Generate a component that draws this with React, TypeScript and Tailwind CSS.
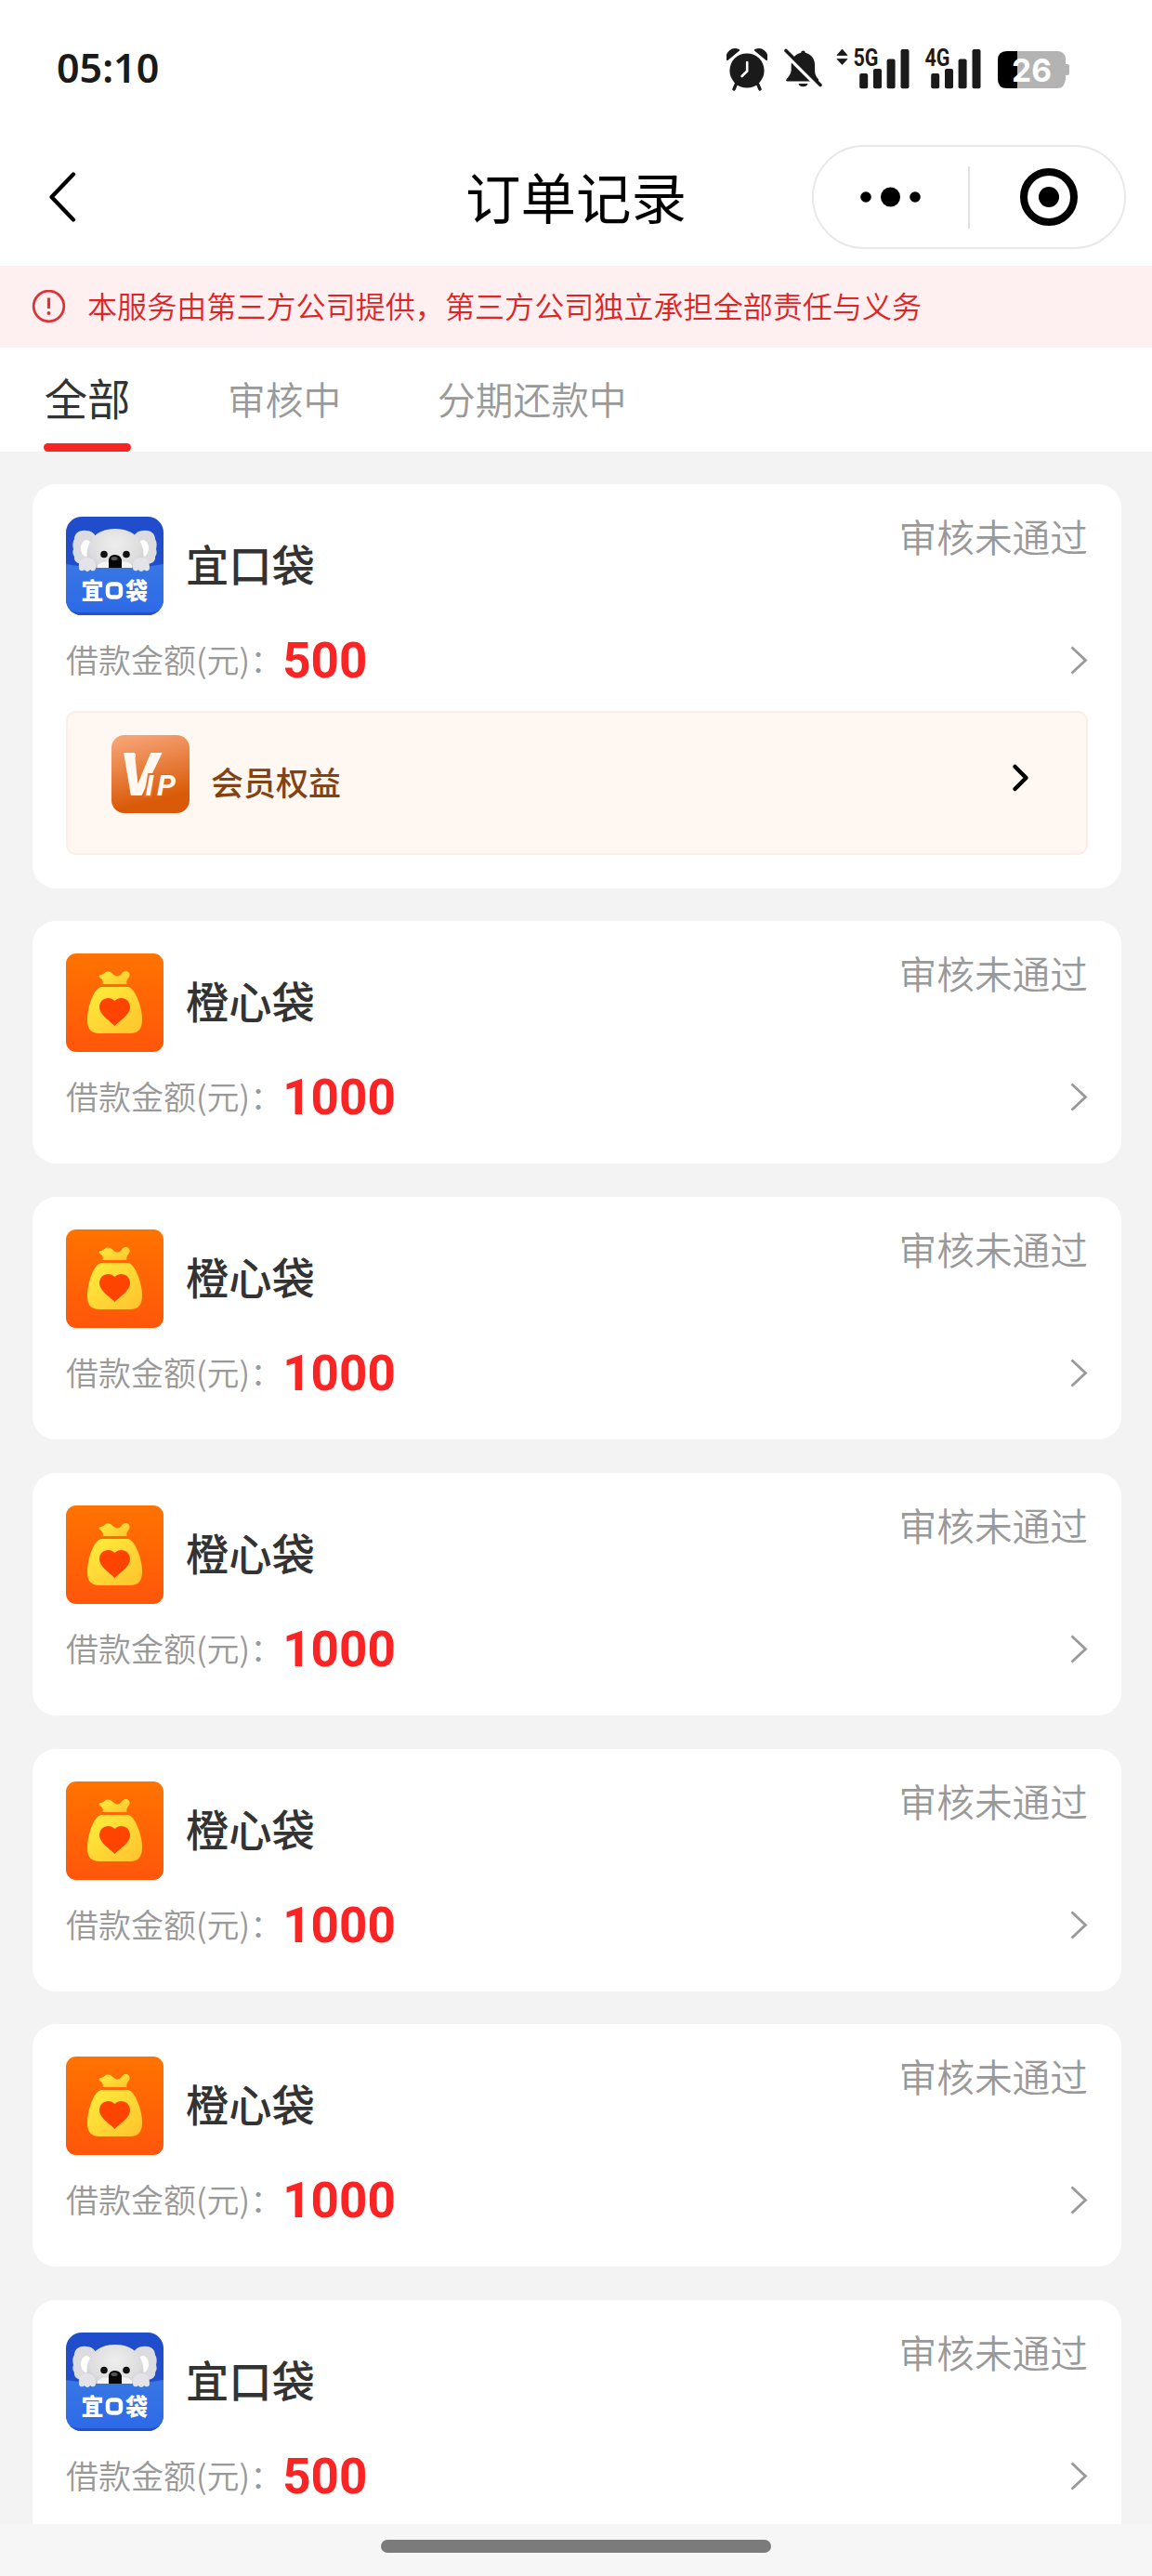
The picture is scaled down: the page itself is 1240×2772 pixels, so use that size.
import React from "react";

type Order = { app: "koala" | "bag"; name: string; amount: string; vip?: boolean };

const orders: Order[] = [
  { app: "koala", name: "宜口袋", amount: "500", vip: true },
  { app: "bag", name: "橙心袋", amount: "1000" },
  { app: "bag", name: "橙心袋", amount: "1000" },
  { app: "bag", name: "橙心袋", amount: "1000" },
  { app: "bag", name: "橙心袋", amount: "1000" },
  { app: "bag", name: "橙心袋", amount: "1000" },
  { app: "koala", name: "宜口袋", amount: "500" },
];

function AlarmIcon() {
  return (
    <svg className="ml-[609px] h-[46px] w-[44px] shrink-0" viewBox="0 0 44 46" fill="none">
      <path d="M1 12C-1 5 6-1 13 2Z" fill="#1a1a1a" stroke="#1a1a1a" strokeWidth="2" strokeLinejoin="round" />
      <path d="M43 12C45 5 38-1 31 2Z" fill="#1a1a1a" stroke="#1a1a1a" strokeWidth="2" strokeLinejoin="round" />
      <path d="M11 37l-3 7M33 37l3 7" stroke="#1a1a1a" strokeWidth="3.4" strokeLinecap="round" />
      <circle cx="22" cy="24" r="18.6" fill="#1a1a1a" />
      <path d="M22.2 15v9.500l-5.600 5.500" stroke="#fff" strokeWidth="2.600" strokeLinecap="round" strokeLinejoin="round" />
    </svg>
  );
}

function MutedBellIcon() {
  return (
    <svg className="ml-[17px] h-[46px] w-[44px] shrink-0" viewBox="0 0 44 46" fill="none">
      <path d="M21.500 2.500c1.300 0 2 .8 2.300 2.200 6.200 1.600 10 6.300 10.300 13v6.800c0 3.400 1.500 6.200 3.600 8.400.8.9.6 2.600-1 2.600H4.500c-1.500 0-1.700-1.700-.8-2.600C6 30.500 8.500 27.500 8.700 23.500v-6c.4-6.500 4-11.200 10.500-12.800.3-1.400 1-2.200 2.300-2.200Z" fill="#1a1a1a" />
      <path d="M16.500 38h10c-.6 2.200-2.500 3.200-5 3.200s-4.400-1-5-3.200Z" fill="#1a1a1a" />
      <path d="M0 3.500 38 41.500" stroke="#fff" strokeWidth="4.500" />
      <path d="M3 2.500 40 39.500" stroke="#1a1a1a" strokeWidth="3.600" strokeLinecap="round" />
    </svg>
  );
}

function Signal({ label, arrows }: { label: string; arrows?: boolean }) {
  return (
    <svg
      className={
        arrows
          ? "ml-[13px] h-[46px] w-[80px] shrink-0 overflow-visible"
          : "ml-[-3px] h-[46px] w-[80px] shrink-0 overflow-visible"
      }
      viewBox="0 0 80 46"
    >
      {arrows && (
        <path d="M1 7.500 6.500 1 12 7.500ZM1 11.500 6.500 17.500 12 11.500Z" fill="#1a1a1a" stroke="#1a1a1a" strokeWidth=".8" strokeLinejoin="round" />
      )}
      <text x="18.500" y="18.700" textLength="27" lengthAdjust="spacingAndGlyphs" className="fill-[#1a1a1a] font-['Roboto'] text-[25px] font-bold">
        {label}
      </text>
      <rect x="25.200" y="27" width="9" height="16.200" rx="2" fill="#1a1a1a" />
      <rect x="40" y="22" width="9" height="21.200" rx="2" fill="#1a1a1a" />
      <rect x="54.600" y="11.500" width="9" height="31.700" rx="2" fill="#1a1a1a" />
      <rect x="69.500" y="1" width="9" height="42.200" rx="2" fill="#1a1a1a" />
    </svg>
  );
}

function Battery() {
  return (
    <svg className="ml-[17px] h-[46px] w-[78px] shrink-0" viewBox="0 0 78 46">
      <defs>
        <clipPath id="battery">
          <path d="M10 3h54q8 0 9 8v6h1.500q2.500 0 2.500 2.500v7q0 2.500-2.500 2.500H73v4q-1 10-9 10H10Q0 43 0 33V13Q0 3 10 3Z" />
        </clipPath>
      </defs>
      <g clipPath="url(#battery)">
        <rect width="78" height="46" fill="#b3b3b3" />
        <rect width="21" height="46" fill="#000" />
      </g>
      <text x="15" y="35.500" textLength="43" lengthAdjust="spacingAndGlyphs" className="fill-white font-['Inter'] text-[34px] font-bold">
        26
      </text>
    </svg>
  );
}

function KoalaLogo() {
  return (
    <svg className="h-[106px] w-[105px] shrink-0 rounded-[17px]" viewBox="0 0 105 106">
      <defs>
        <radialGradient id="fur" cx=".5" cy=".35" r=".7">
          <stop offset="0" stopColor="#eeeeee" />
          <stop offset=".65" stopColor="#dddddf" />
          <stop offset="1" stopColor="#bfc1c8" />
        </radialGradient>
        <linearGradient id="pocket" x1="0" y1="0" x2="0" y2="1">
          <stop offset="0" stopColor="#3877e4" />
          <stop offset="1" stopColor="#2d69e8" />
        </linearGradient>
      </defs>
      <rect width="105" height="106" fill="#204dcc" />
      <path d="M9 24c0-7 7-10 13-9 6 0 10 4 11 9l-2 27H18c-5 0-10-3-9-8-2-3-2-5-1-8-1-4-1-8 1-11Z" fill="#dcdce0" />
      <path d="M96 24c0-7-7-10-13-9-6 0-10 4-11 9l2 27h13c5 0 10-3 9-8 2-3 2-5 1-8 1-4 1-8-1-11Z" fill="#dcdce0" />
      <ellipse cx="22" cy="34" rx="6" ry="9" fill="#fff" />
      <ellipse cx="83" cy="34" rx="6" ry="9" fill="#fff" />
      <path d="M23 48C20 28 31 13 53 13s33 15 30 35l-9 14H31Z" fill="url(#fur)" />
      <path d="M34 52c4-4 10-4 14-3h10c4-1 10-1 13 3v4H34Z" fill="#f5f5f5" />
      <circle cx="41" cy="40.500" r="3.800" fill="#111" />
      <circle cx="65" cy="40.500" r="3.800" fill="#111" />
      <path d="M46 56v-9c0-8 13-8 14 0v9Z" fill="#080808" />
      <ellipse cx="52" cy="45" rx="3.500" ry="2" fill="#555" />
      <path d="M0 51q17 3 32 4h41q16-1 32-4v55H0Z" fill="url(#pocket)" />
      <path d="M0 91q1 12 15 12h75q14 0 15-12v15H0Z" fill="#2451c8" />
      <path d="M14 55c-1-7 3-11 9-11s10 5 9 11c0 4-4 4-6 2-2 3-5 2-6 0-2 2-6 2-6-2ZM72 55c-1-7 3-11 9-11s9 4 9 11c0 4-4 4-6 2-1 2-4 3-6 0-2 2-6 2-6-2Z" fill="#e4e4e8" />
      <text x="16.500" y="89" textLength="24" lengthAdjust="spacingAndGlyphs" className="fill-white font-['Noto_Sans_CJK_SC'] text-[25px] font-black">
        宜
      </text>
      <rect x="45" y="72.500" width="14" height="14" rx="4" fill="none" stroke="#fff" strokeWidth="4.500" />
      <text x="64" y="89" textLength="24" lengthAdjust="spacingAndGlyphs" className="fill-white font-['Noto_Sans_CJK_SC'] text-[25px] font-black">
        袋
      </text>
    </svg>
  );
}

function BagLogo() {
  return (
    <svg className="h-[106px] w-[105px] shrink-0 rounded-[11px]" viewBox="0 0 105 106">
      <defs>
        <linearGradient id="orange" x1="0" y1="0" x2="0" y2="1">
          <stop offset="0" stopColor="#ff7300" />
          <stop offset="1" stopColor="#ff560b" />
        </linearGradient>
        <linearGradient id="gold" x1="0" y1="0" x2="1" y2="1">
          <stop offset="0" stopColor="#ffee3c" />
          <stop offset="1" stopColor="#ffc22e" />
        </linearGradient>
      </defs>
      <rect width="105" height="106" fill="url(#orange)" />
      <path d="M39.500 33c1-3 0-5-3-7-1.500-1.500-1-3 1-3 3 0 4-3 7-3.500 5-1 6.500 5 11 5 4 0 4-4 7-5 4-1.500 6.500 1.500 6 4.500-.5 3-4 4-3 9Z" fill="url(#gold)" />
      <path d="M38 36h29c7 1 15 21 15 35 0 10-4 15-13 15H36c-9 0-13-5-13-14 0-17 8-35 15-36Z" fill="url(#gold)" />
      <path d="M52.500 78C48 73 36 66 36 58c0-10 11-13 16.500-7C58 45 69 48 69 58c0 8-12 15-16.500 20Z" fill="#ff4300" />
    </svg>
  );
}

function VipLogo() {
  return (
    <svg className="mt-[24px] ml-[47px] h-[84px] w-[84px] shrink-0 rounded-[14px]" viewBox="0 0 84 84">
      <defs>
        <linearGradient id="copper" x1=".35" y1="0" x2=".6" y2="1">
          <stop offset="0" stopColor="#f6a273" />
          <stop offset=".85" stopColor="#d95a08" />
        </linearGradient>
      </defs>
      <rect width="84" height="84" fill="url(#copper)" />
      <path d="M14 20h12v4H15Z" fill="#fff8f0" />
      <text y="65" className="fill-[#fff8f0] font-['Roboto'] italic">
        <tspan x="9" className="text-[64px] font-black">V</tspan>
        <tspan x="36.500" className="text-[32px] font-bold [paint-order:stroke] [stroke:#e2702c] [stroke-width:4px]">I</tspan>
        <tspan x="49" className="text-[32px] font-bold [paint-order:stroke] [stroke:#df6820] [stroke-width:2px]">P</tspan>
      </text>
    </svg>
  );
}

function OrderCard({ order }: { order: Order }) {
  return (
    <article
      className={
        order.vip
          ? "h-[434.500px] shrink-0 rounded-[25px] bg-white px-[36px] pt-[35px]"
          : "h-[261px] shrink-0 rounded-[25px] bg-white px-[36px] pt-[35px]"
      }
    >
      <div className="flex h-[106px] items-start">
        {order.app === "koala" ? <KoalaLogo /> : <BagLogo />}
        <h2 className="ml-[24px] text-[46.300px] leading-[100px] font-medium text-[#333]">{order.name}</h2>
        <span className="ml-auto text-[40.700px] leading-[42px] font-[350] text-[#999]">审核未通过</span>
      </div>
      <div className="mt-[16px] flex h-[64px] items-center">
        <span className="pb-[2px] text-[35px] leading-[62px] font-[350] text-[#999]">借款金额(元)：</span>
        <span className="pt-[2px] font-['Roboto'] text-[53px] leading-[64px] font-bold text-[#fb2424]">{order.amount}</span>
        <svg className="ml-auto h-[32px] w-[19px]" viewBox="0 0 19 32" fill="none">
          <path d="M1.500 2.500 16.500 16.500 1.500 30.500" stroke="#999" strokeWidth="2.800" />
        </svg>
      </div>
      {order.vip && (
        <div className="mt-[23px] flex h-[155px] rounded-[11px] border-2 border-[#fbeee6] bg-[#fff7f1]">
          <VipLogo />
          <span className="ml-[23px] text-[35px] leading-[147px] font-medium text-[#834211]">会员权益</span>
          <svg className="mt-[54px] mr-[61px] ml-auto h-[32px] w-[20px]" viewBox="0 0 20 32" fill="none">
            <path d="M4.500 4 16.500 16 4.500 28" stroke="#000" strokeWidth="4.500" strokeLinecap="round" strokeLinejoin="round" />
          </svg>
        </div>
      )}
    </article>
  );
}

export default function App() {
  return (
    <div className="flex h-[2772px] w-[1240px] flex-col overflow-hidden bg-[#f3f3f3] font-['Noto_Sans_CJK_SC',sans-serif]">
      <div className="flex h-[138px] shrink-0 items-start bg-white pt-[52px] pl-[61px]">
        <span className="w-[112px] font-['Noto_Sans'] text-[43px] leading-[42px] font-semibold text-[#1a1a1a]">05:10</span>
        <AlarmIcon />
        <MutedBellIcon />
        <Signal label="5G" arrows />
        <Signal label="4G" />
        <Battery />
      </div>

      <header className="grid h-[148px] shrink-0 grid-cols-[440px_360px_440px] bg-white">
        <svg className="mt-[45px] ml-[50px] h-[58px] w-[34px]" viewBox="0 0 34 58" fill="none">
          <path d="M29 4.500 5.500 29 29 53.500" stroke="#000" strokeWidth="4.300" strokeLinecap="round" strokeLinejoin="round" />
        </svg>
        <h1 className="text-center text-[59.500px] leading-[145px] text-black">订单记录</h1>
        <div className="mt-[18px] ml-[74px] flex h-[112px] w-[338px] items-center rounded-full border-2 border-[#e8e8e8]">
          <svg className="ml-[49px] h-[24px] w-[70px]" viewBox="0 0 70 24">
            <circle cx="7" cy="12" r="5.800" />
            <circle cx="33.500" cy="12" r="10.500" />
            <circle cx="60" cy="12" r="5.800" />
          </svg>
          <span className="ml-[47px] h-[67px] w-[2px] bg-[#e0e0e0]" />
          <svg className="ml-[53px] h-[64px] w-[64px]" viewBox="0 0 64 64">
            <circle cx="32" cy="32" r="27" fill="none" stroke="#000" strokeWidth="8" />
            <circle cx="32" cy="32" r="11" />
          </svg>
        </div>
      </header>

      <div className="flex h-[88px] shrink-0 items-center bg-[#fef0f0] pl-[34px]">
        <svg className="h-[37px] w-[37px]" viewBox="0 0 37 37" fill="none">
          <circle cx="18.500" cy="17.500" r="16.300" stroke="#df3237" strokeWidth="2.800" />
          <path d="M18.500 8.500v11.500" stroke="#df3237" strokeWidth="3.200" />
          <circle cx="18.500" cy="25" r="2" fill="#df3237" />
        </svg>
        <span className="ml-[23px] -translate-y-[2px] text-[32.100px] leading-[88px] font-[350] text-[#e02426]">
          本服务由第三方公司提供，第三方公司独立承担全部责任与义务
        </span>
      </div>

      <nav className="flex h-[112px] shrink-0 bg-white pl-[47px]">
        <div className="flex w-[94px] flex-col">
          <span className="h-[103px] text-center text-[46.300px] leading-[105px] whitespace-nowrap text-[#333]">全部</span>
          <span className="h-[9px] rounded-full bg-[#fb2424]" />
        </div>
        <span className="ml-[104px] text-[40.700px] leading-[110px] font-[350] text-[#999]">审核中</span>
        <span className="ml-[104px] text-[40.700px] leading-[110px] font-[350] text-[#999]">分期还款中</span>
      </nav>

      <main className="flex min-h-0 flex-1 flex-col gap-[35.800px] overflow-hidden pt-[35px] pr-[33px] pl-[35px]">
        {orders.map((order, i) => (
          <OrderCard key={i} order={order} />
        ))}
      </main>

      <footer className="flex h-[56px] shrink-0 justify-center bg-[#f6f6f6] pt-[17px]">
        <span className="h-[14px] w-[420px] rounded-full bg-[#7b7b7b]" />
      </footer>
    </div>
  );
}
